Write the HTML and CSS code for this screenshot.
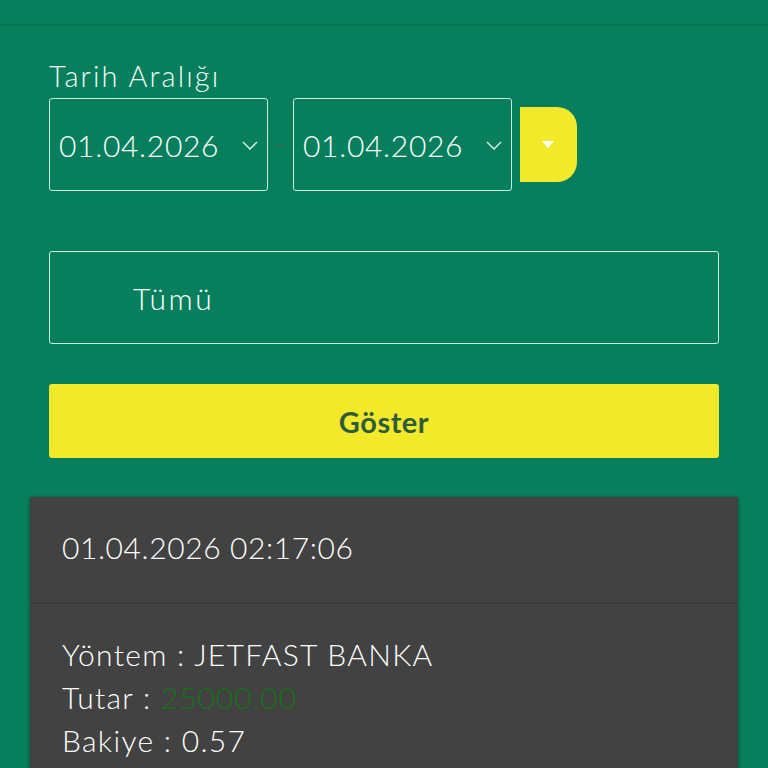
FILE: index.html
```html
<!DOCTYPE html>
<html lang="tr">
<head>
<meta charset="utf-8">
<title>Tarih Aralığı</title>
<link rel="stylesheet" href="styles.css">
</head>
<body>
<div class="topbar"></div>
<main class="main">
  <div class="label">Tarih Aralığı</div>
  <div class="date-row">
    <div class="date-box">
      <span class="date-text">01.04.2026</span>
      <svg class="chev" width="16" height="9" viewBox="0 0 16 9"><path d="M1 1 L8 8 L15 1" fill="none" stroke="#e8f6ef" stroke-width="1.3"/></svg>
    </div>
    <div class="dash"><span></span></div>
    <div class="date-box">
      <span class="date-text">01.04.2026</span>
      <svg class="chev" width="16" height="9" viewBox="0 0 16 9"><path d="M1 1 L8 8 L15 1" fill="none" stroke="#e8f6ef" stroke-width="1.3"/></svg>
    </div>
    <div class="drop-btn"><span class="tri"></span></div>
  </div>
  <div class="select-box"><span class="select-text">Tümü</span></div>
  <div class="show-btn">Göster</div>
  <section class="card">
    <div class="card-head">01.04.2026 02:17:06</div>
    <div class="card-body">
      <div class="row">Yöntem : JETFAST BANKA</div>
      <div class="row">Tutar : <span class="amount">25000.00</span></div>
      <div class="row">Bakiye : 0.57</div>
    </div>
  </section>
</main>
</body>
</html>
```
FILE: styles.css
```css
html, body {
  margin: 0;
  padding: 0;
}
body {
  background: #077f5c;
  font-family: Lato, "Noto Sans", sans-serif;
  font-weight: 300;
  color: #ffffff;
  height: 768px;
  overflow: hidden;
}
.topbar {
  height: 24px;
  border-bottom: 2px solid #06714f;
}
.main {
  padding: 0 49px;
}
.label {
  font-size: 29px;
  letter-spacing: 2.1px;
  line-height: 34px;
  margin-top: 33px;
  height: 39px;
  color: #f4fbf8;
}
.date-row {
  display: flex;
  align-items: center;
}
.date-box {
  box-sizing: border-box;
  width: 219px;
  height: 93px;
  border: 1.5px solid #c9eedd;
  border-radius: 3px;
  display: flex;
  align-items: center;
  justify-content: space-between;
  padding: 0 9px 0 9px;
}
.date-text {
  font-size: 30px;
  letter-spacing: 0.7px;
}
.chev {
  display: block;
  margin-top: 2px;
}
.dash {
  width: 25px;
  display: flex;
  justify-content: center;
}
.dash span {
  width: 8px;
  height: 2px;
  background: #2b6b52;
  margin-left: -1px;
}
.drop-btn {
  width: 57px;
  height: 75px;
  margin-left: 8px;
  background: #f3e92b;
  border-radius: 0 20px 20px 0;
  display: flex;
  align-items: center;
  justify-content: center;
}
.tri {
  width: 0;
  height: 0;
  border-left: 6px solid transparent;
  border-right: 6px solid transparent;
  border-top: 7px solid #ffffff;
  margin-left: -1px;
}
.select-box {
  box-sizing: border-box;
  margin-top: 60px;
  height: 93px;
  border: 1.5px solid #c9eedd;
  border-radius: 3px;
  display: flex;
  align-items: center;
  padding-left: 83px;
}
.select-text {
  font-size: 30px;
  letter-spacing: 2.6px;
}
.show-btn {
  margin-top: 40px;
  height: 74px;
  background: #f3e92b;
  border-radius: 3px;
  display: flex;
  align-items: center;
  justify-content: center;
  font-size: 29px;
  letter-spacing: 0.5px;
  font-weight: 700;
  color: #2f5b3d;
}
.card {
  margin: 39px -19px 0;
  background: #424242;
  box-shadow: 0 1px 4px rgba(0, 0, 0, 0.45);
}
.card-head {
  box-sizing: border-box;
  height: 107px;
  border-bottom: 2px solid #3a3a3a;
  display: flex;
  align-items: center;
  padding-left: 32px;
  font-size: 30px;
  letter-spacing: 0.6px;
  padding-bottom: 5px;
}
.card-body {
  padding: 29px 32px 20px;
}
.row {
  font-size: 30px;
  letter-spacing: 1.3px;
  line-height: 43px;
}
.amount {
  color: #137513;
  letter-spacing: 0.9px;
}
```
